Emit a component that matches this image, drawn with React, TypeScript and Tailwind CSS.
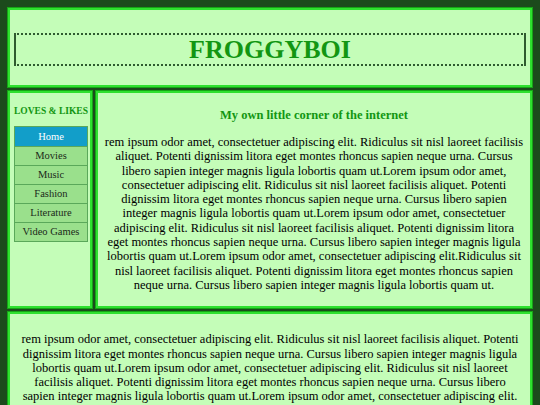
import React from 'react';

const serif = { fontFamily: '"Liberation Serif", "Times New Roman", serif' };

const LOREM_MAIN =
  'rem ipsum odor amet, consectetuer adipiscing elit. Ridiculus sit nisl laoreet facilisis aliquet. Potenti dignissim litora eget montes rhoncus sapien neque urna. Cursus libero sapien integer magnis ligula lobortis quam ut.Lorem ipsum odor amet, consectetuer adipiscing elit. Ridiculus sit nisl laoreet facilisis aliquet. Potenti dignissim litora eget montes rhoncus sapien neque urna. Cursus libero sapien integer magnis ligula lobortis quam ut.Lorem ipsum odor amet, consectetuer adipiscing elit. Ridiculus sit nisl laoreet facilisis aliquet. Potenti dignissim litora eget montes rhoncus sapien neque urna. Cursus libero sapien integer magnis ligula lobortis quam ut.Lorem ipsum odor amet, consectetuer adipiscing elit.Ridiculus sit nisl laoreet facilisis aliquet. Potenti dignissim litora eget montes rhoncus sapien neque urna. Cursus libero sapien integer magnis ligula lobortis quam ut.';

const LOREM_FOOT =
  'rem ipsum odor amet, consectetuer adipiscing elit. Ridiculus sit nisl laoreet facilisis aliquet. Potenti dignissim litora eget montes rhoncus sapien neque urna. Cursus libero sapien integer magnis ligula lobortis quam ut.Lorem ipsum odor amet, consectetuer adipiscing elit. Ridiculus sit nisl laoreet facilisis aliquet. Potenti dignissim litora eget montes rhoncus sapien neque urna. Cursus libero sapien integer magnis ligula lobortis quam ut.Lorem ipsum odor amet, consectetuer adipiscing elit. Ridiculus sit nisl laoreet facilisis aliquet. Potenti dignissim litora eget montes rhoncus sapien neque urna. Cursus libero sapien integer magnis ligula lobortis quam ut.';

const nav = ['Home', 'Movies', 'Music', 'Fashion', 'Literature', 'Video Games'];

// bright green frame used on every panel
const panel = 'bg-[#c4fdb8] border-2 border-[#2ee02e] shadow-[0_0_0_1px_#16a316]';

export default function App() {
  return (
    <div className="min-h-screen bg-[#1c4a1c] pt-[8px] pl-[8px] pr-[8px] pb-[8px] flex flex-col gap-[4px]" style={serif}>
      {/* header */}
      <header className={`${panel} h-[79px] pt-[23px] px-[4px]`}>
        <div className="h-[33px] border-2 border-[#2f5a2f] [border-style:dotted_solid] flex items-center justify-center">
          <h1 className="text-[26px] font-bold text-[#129612] leading-none">FROGGYBOI</h1>
        </div>
      </header>

      <div className="flex gap-[4px]">
        {/* sidebar */}
        <aside className={`${panel} w-[84px] shrink-0 pl-[4px] pr-[2px]`}>
          <h3 className="text-[9.5px] font-bold text-[#129612] text-center mt-[11px] mb-[8px] whitespace-nowrap">
            LOVES &amp; LIKES
          </h3>
          <ul className="border border-[#5aa85a]">
            {nav.map((item, i) => (
              <li
                key={item}
                className={`h-[19px] flex items-center justify-center text-[10.5px] ${
                  i === 0 ? 'bg-[#129ec9] text-white' : 'bg-[#9ae08c] text-[#1a2a1a] border-t border-[#5aa85a]'
                }`}
              >
                {item}
              </li>
            ))}
          </ul>
        </aside>

        {/* main */}
        <main className={`${panel} flex-1 px-[5px] pt-[15px] pb-[14px]`}>
          <h2 className="text-[12.5px] leading-[14px] font-bold text-[#129612] text-center mb-[13px]">
            My own little corner of the internet
          </h2>
          <p className="text-[12.5px] leading-[14.3px] text-center text-black">{LOREM_MAIN}</p>
        </main>
      </div>

      {/* footer */}
      <footer className={`${panel} px-[8px] pt-[18px] pb-[18px]`}>
        <p className="text-[12.5px] leading-[14.3px] text-center text-black">{LOREM_FOOT}</p>
      </footer>
    </div>
  );
}
